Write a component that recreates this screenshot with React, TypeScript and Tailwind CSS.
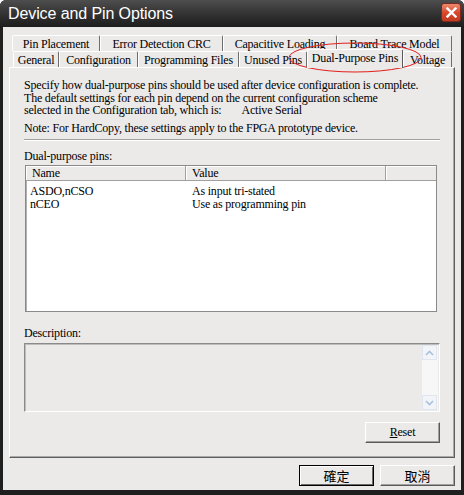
import React from 'react';

const serif = "font-['Liberation_Serif','Noto_Sans_CJK_TC',serif]";

type Tab = { label: string; w: number; selected?: boolean };

const row1: Tab[] = [
  { label: 'Pin Placement', w: 88 },
  { label: 'Error Detection CRC', w: 123 },
  { label: 'Capacitive Loading', w: 114 },
  { label: 'Board Trace Model', w: 115 },
];

const row2: Tab[] = [
  { label: 'General', w: 46 },
  { label: 'Configuration', w: 79 },
  { label: 'Programming Files', w: 101 },
  { label: 'Unused Pins', w: 68 },
  { label: 'Dual-Purpose Pins', w: 96, selected: true },
  { label: 'Voltage', w: 49 },
];

function TabButton({ tab }: { tab: Tab }) {
  if (tab.selected) {
    return (
      <div
        style={{ width: tab.w }}
        className="relative z-10 -mt-[2px] h-[19px] -mb-[1px] border-l border-t border-white border-r border-r-[#5a5a5a] bg-[#ece9e9] rounded-t-[2px] text-center leading-[15px] pt-[1px]"
      >
        {tab.label}
      </div>
    );
  }
  return (
    <div
      style={{ width: tab.w }}
      className="h-[16px] border-l border-t border-white border-r border-r-[#6e6e6e] rounded-t-[2px] text-center leading-[15px] pt-[1px]"
    >
      {tab.label}
    </div>
  );
}

function WinButton({ children, isDefault }: { children: React.ReactNode; isDefault?: boolean }) {
  return (
    <div
      className={
        'h-[21px] w-[75px] flex items-center justify-center ' +
        (isDefault
          ? 'border border-black shadow-[inset_1px_1px_0_#fff,inset_-1px_-1px_0_#6a6a6a]'
          : 'border-t border-l border-white border-r border-b border-r-[#5a5a5a] border-b-[#5a5a5a] shadow-[inset_-1px_-1px_0_#a0a0a0]')
      }
    >
      {children}
    </div>
  );
}

function ArrowBox({ up }: { up?: boolean }) {
  return (
    <div className="w-[15px] h-[15px] border border-[#dfe6ef] bg-[#f2f4f7] flex items-center justify-center">
      <svg width="9" height="6" viewBox="0 0 9 6">
        <path
          d={up ? 'M1 5 L4.5 1.5 L8 5' : 'M1 1 L4.5 4.5 L8 1'}
          fill="none"
          stroke="#a9c0dc"
          strokeWidth="1.6"
        />
      </svg>
    </div>
  );
}

export default function App() {
  return (
    <div className={`relative w-[464px] h-[495px] bg-[#1f1f1f] text-[12px] tracking-[-0.2px] text-black ${serif} overflow-hidden rounded-t-[6px]`}>
      {/* title bar */}
      <div className="h-[27px] flex items-center justify-between pl-[8px] pr-[3px] bg-gradient-to-b from-[#4e4e4e] via-[#333333] to-[#1e1e1e]">
        <span className="font-['Liberation_Sans',sans-serif] text-white text-[16px] leading-none tracking-[-0.1px]">
          Device and Pin Options
        </span>
        <div className="w-[20px] h-[19px] mt-[-2px] rounded-[3px] border border-[#7a2a1e] bg-gradient-to-b from-[#ee8a6f] via-[#d9482c] to-[#c23a1f] flex items-center justify-center">
          <svg width="11" height="11" viewBox="0 0 11 11">
            <path d="M1.5 1.5 L9.5 9.5 M9.5 1.5 L1.5 9.5" stroke="#fff" strokeWidth="2.4" strokeLinecap="square" />
          </svg>
        </div>
      </div>

      {/* body */}
      <div className="mx-[3px] h-[463px] bg-[#ece9e9] pt-[8px]">
        <div className="flex pl-[9px]">
          {row1.map((t) => (
            <TabButton key={t.label} tab={t} />
          ))}
        </div>
        <div className="flex pl-[10px]">
          {row2.map((t) => (
            <TabButton key={t.label} tab={t} />
          ))}
        </div>

        {/* panel */}
        <div className="ml-[6px] w-[446px] h-[391px] border-l border-t border-white border-r border-b border-r-[#5f5f5f] border-b-[#5f5f5f] shadow-[inset_-1px_-1px_0_#a8a8a8] pl-[14px] pr-[14px] pt-[11px] leading-[12.5px]">
          <p>Specify how dual-purpose pins should be used after device configuration is complete.</p>
          <p>The default settings for each pin depend on the current configuration scheme</p>
          <p>
            selected in the Configuration tab, which is:<span className="ml-[20px]">Active Serial</span>
          </p>
          <p className="mt-[5px]">Note: For HardCopy, these settings apply to the FPGA prototype device.</p>

          <div className="mt-[5px] h-[2px] border-t border-[#a0a0a0] border-b border-b-white" />

          <p className="mt-[9px]">Dual-purpose pins:</p>

          {/* list */}
          <div className="mt-[2px] ml-[1px] w-[412px] h-[147px] border border-[#8a8a8a] bg-white shadow-[inset_1px_1px_0_#b0b0b0]">
            <div className="flex h-[15px] bg-[#ece9e9] leading-[14px]">
              <div className="w-[160px] pl-[6px] border-r border-[#a0a0a0] border-b border-b-[#a0a0a0] shadow-[inset_1px_1px_0_#fff]">Name</div>
              <div className="w-[200px] pl-[6px] border-r border-[#a0a0a0] border-b border-b-[#a0a0a0] shadow-[inset_1px_1px_0_#fff]">Value</div>
              <div className="flex-1 border-b border-[#a0a0a0] shadow-[inset_1px_1px_0_#fff]" />
            </div>
            <div className="pt-[4px] leading-[13px]">
              <div className="flex">
                <div className="w-[160px] pl-[4px]">ASDO,nCSO</div>
                <div className="pl-[6px]">As input tri-stated</div>
              </div>
              <div className="flex">
                <div className="w-[160px] pl-[4px]">nCEO</div>
                <div className="pl-[6px]">Use as programming pin</div>
              </div>
            </div>
          </div>

          <p className="mt-[15px]">Description:</p>

          {/* description box */}
          <div className="mt-[4px] w-[416px] h-[69px] border-t border-l border-[#8a8a8a] border-r border-b border-r-white border-b-white shadow-[inset_1px_1px_0_#bdbdbd] flex justify-end pr-[1px] pt-[1px]">
            <div className="w-[16px] h-[65px] bg-[#f7f7f8] flex flex-col justify-between">
              <ArrowBox up />
              <ArrowBox />
            </div>
          </div>

          <div className="mt-[10px] flex justify-end">
            <WinButton>
              <span>
                <span className="underline">R</span>eset
              </span>
            </WinButton>
          </div>
        </div>

        {/* bottom buttons */}
        <div className="mt-[7px] flex justify-end gap-[6px] pr-[6px] font-['Noto_Sans_CJK_TC',sans-serif] text-[13px] tracking-normal">
          <WinButton isDefault>確定</WinButton>
          <WinButton>取消</WinButton>
        </div>
      </div>

      {/* red annotation ellipse */}
      <svg className="absolute left-0 top-0 pointer-events-none" width="464" height="495">
        <ellipse cx="355" cy="57.5" rx="66" ry="14.5" fill="none" stroke="#e0201a" strokeWidth="1" />
      </svg>
    </div>
  );
}
